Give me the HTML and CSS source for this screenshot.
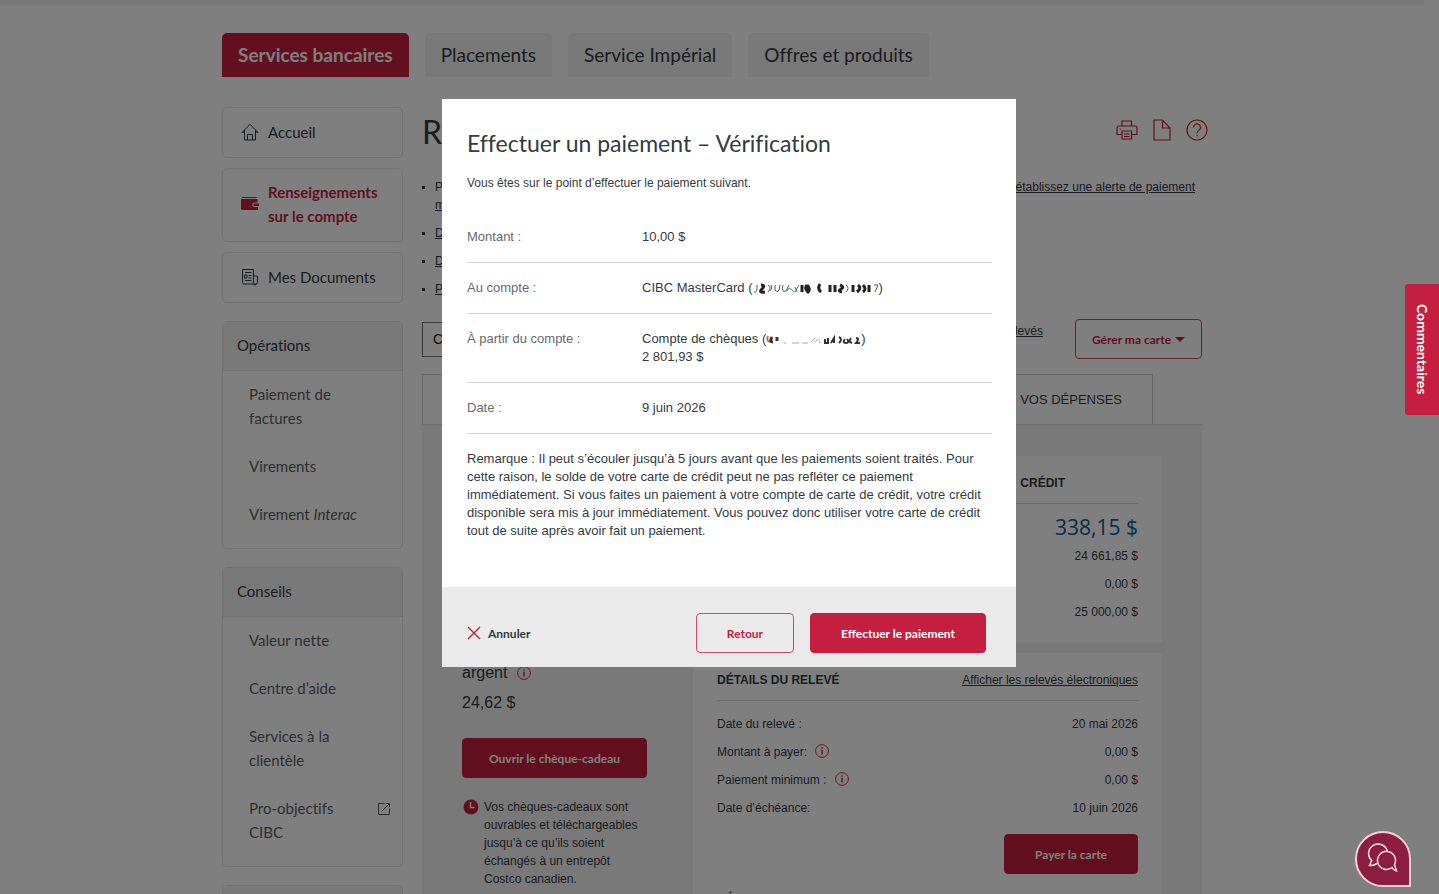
FILE: index.html
```html
<!DOCTYPE html>
<html lang="fr">
<head>
  <meta charset="UTF-8">
  <meta name="viewport" content="width=device-width, initial-scale=1.0">
  <title>Effectuer un paiement – Vérification</title>
  <link rel="stylesheet" href="styles.css">
</head>
<body>
  <svg class="defs" aria-hidden="true">
    <symbol id="info" viewBox="0 0 14 14">
      <circle cx="7" cy="7" r="6.4" fill="none" stroke="currentColor" stroke-width="0.9"/>
      <path d="M7 5.8v4.700M7 3.300v1.400" fill="none" stroke="currentColor" stroke-width="1.400"/>
    </symbol>
  </svg>

  <div class="page">
    <div class="topband"></div>
    <nav class="tabs">
      <a href="#" class="tab active">Services bancaires</a>
      <a href="#" class="tab">Placements</a>
      <a href="#" class="tab">Service Impérial</a>
      <a href="#" class="tab">Offres et produits</a>
    </nav>

    <div class="columns">
      <aside class="sidebar">
        <a href="#" class="side-link">
          <svg width="18" height="18" viewBox="0 0 18 18" fill="none" stroke="currentColor"><path d="M1 9.5 9 1.3l8 8.2M3.5 7.2V17h11V7.2M1 9.5l2.5-.8M17 9.5l-2.500-.8M6.500 17v-5.500h5V17"/></svg>
          <span>Accueil</span>
        </a>
        <a href="#" class="side-link current">
          <svg width="18" height="16" viewBox="0 0 18 16" fill="currentColor"><path d="M1.500 1h13.500a1 1 0 0 1 1 1H0.500a1 1 0 0 1 1-1zM0 3h16.500v3.500h-3a2 2 0 0 0 0 4.500h3.500v3H1.500A1.500 1.500 0 0 1 0 12.500zM13.500 7.500H18v2.500h-4.500a1.250 1.250 0 0 1 0-2.500z"/></svg>
          <span>Renseignements sur le compte</span>
        </a>
        <a href="#" class="side-link">
          <svg width="18" height="18" viewBox="0 0 18 18" fill="none" stroke="currentColor"><path d="M12.500 14.500v-13H1.500v13a1.500 1.500 0 0 0 1.500 1.500h12a1.500 1.500 0 0 0 1.500-1.500v-6.500h-4M12.500 14.500a1.500 1.500 0 0 0 3 1.500M4 4.500h6.500M7.500 7.500h3M7.500 10h3M4 12.500h6.500M3.500 7h2.500v3h-2.500z"/></svg>
          <span>Mes Documents</span>
        </a>

        <section class="side-group">
          <h2>Opérations</h2>
          <ul>
            <li><a href="#">Paiement de factures</a></li>
            <li><a href="#">Virements</a></li>
            <li><a href="#">Virement <em>Interac</em></a></li>
          </ul>
        </section>
        <section class="side-group">
          <h2>Conseils</h2>
          <ul>
            <li><a href="#">Valeur nette</a></li>
            <li><a href="#">Centre d’aide</a></li>
            <li><a href="#">Services à la clientèle</a></li>
            <li>
              <a href="#">Pro-objectifs CIBC</a>
              <svg class="external" width="14" height="14" viewBox="0 0 14 14" fill="none" stroke="currentColor"><path d="M7.500 1.500h-6v11h11v-6M4.500 9.500l8-8M9 1.500h3.500v3.500"/></svg>
            </li>
          </ul>
        </section>
        <section class="side-group"><h2></h2></section>
      </aside>

      <main class="main">
        <header class="title-row">
          <h1>R</h1>
          <div class="tools">
            <button type="button" aria-label="Imprimer"><svg width="22" height="20" viewBox="0 0 22 20" fill="none" stroke="currentColor" stroke-width="1.200"><path d="M6 6V1h9.500v5M6 14.500H1V8a2 2 0 0 1 2-2h16a2 2 0 0 1 2 2v6.500h-5.500M3.500 9h1.500M6 11h9.500v8H6zM8 14h5.500M8 16.500h5.500"/></svg></button>
            <button type="button" aria-label="Document"><svg width="18" height="22" viewBox="0 0 18 22" fill="none" stroke="currentColor" stroke-width="1.200"><path d="M1 1h8.500l7.500 8v12H1zM9.500 1v8H17"/></svg></button>
            <button type="button" aria-label="Aide"><svg width="22" height="22" viewBox="0 0 22 22" fill="none" stroke="currentColor" stroke-width="1.200"><circle cx="11" cy="11" r="10"/><path d="M7.500 8.500a3.500 3.500 0 1 1 5.500 2.800c-1.300 1-2 1.500-2 3M11 15.800v1.400"/></svg></button>
          </div>
        </header>

        <ul class="notices">
          <li>
            <div class="notice-line"><span>P</span><a href="#">établissez une alerte de paiement</a></div>
            <a href="#">m</a>
          </li>
          <li><a href="#">D</a></li>
          <li><a href="#">D</a></li>
          <li><a href="#">P</a></li>
        </ul>

        <div class="account-bar">
          <select aria-label="Compte"><option>C</option></select>
          <a href="#" class="statements">levés</a>
          <button type="button" class="btn outline">Gérer ma carte <span class="caret"></span></button>
        </div>

        <div class="account-tabs"><a href="#">VOS DÉPENSES</a></div>

        <div class="panel">
          <section class="rewards">
            <p class="big">argent <svg class="info"><use href="#info"/></svg></p>
            <p class="big">24,62 $</p>
            <button type="button" class="btn solid">Ouvrir le chèque-cadeau</button>
            <div class="expiry">
              <svg width="16" height="16" viewBox="0 0 16 16"><circle cx="8" cy="8" r="7.500" fill="#c41f3e"/><path d="M7.500 3v5.500h4" fill="none" stroke="#fff" stroke-width="1.400"/></svg>
              <p>Vos chèques-cadeaux sont ouvrables et téléchargeables jusqu’à ce qu’ils soient échangés à un entrepôt Costco canadien.</p>
            </div>
          </section>
          <div class="cards">
            <section class="card">
              <div class="card-head end"><h3>CRÉDIT</h3></div>
              <p class="available">338,15 $</p>
              <p class="amount">24 661,85 $</p>
              <p class="amount">0,00 $</p>
              <p class="amount">25 000,00 $</p>
            </section>
            <section class="card">
              <div class="card-head"><h3>DÉTAILS DU RELEVÉ</h3><a href="#">Afficher les relevés électroniques</a></div>
              <dl>
                <div><dt>Date du relevé :</dt><dd>20 mai 2026</dd></div>
                <div><dt>Montant à payer: <svg class="info"><use href="#info"/></svg></dt><dd>0,00 $</dd></div>
                <div><dt>Paiement minimum : <svg class="info"><use href="#info"/></svg></dt><dd>0,00 $</dd></div>
                <div><dt>Date d’échéance:</dt><dd>10 juin 2026</dd></div>
              </dl>
              <button type="button" class="btn solid pay">Payer la carte</button>
              <h3 class="next-head">DÉ</h3>
            </section>
          </div>
        </div>
      </main>
    </div>
  </div>

  <div class="overlay">
    <div class="overlay-inner">
      <div class="modal" role="dialog" aria-modal="true" aria-labelledby="modalTitle">
        <div class="modal-body">
          <h2 id="modalTitle">Effectuer un paiement – Vérification</h2>
          <p class="intro">Vous êtes sur le point d’effectuer le paiement suivant.</p>
          <dl class="details">
            <div><dt>Montant :</dt><dd>10,00 $</dd></div>
            <div>
              <dt>Au compte :</dt>
              <dd>CIBC MasterCard (<svg class="masked" width="126" height="12" viewBox="0 0 126 12" fill="none" stroke="#222"><path d="M1 10q3 1 3-4V3M15 3q4 2 0 7M17 9q3-3 1-6M22 3v5q4 5 5-5M30 3q-2 8 3 6l3-6M93 3q4 3 0 7M121 3h4l-3 7" stroke="#555"/><path d="M8 3q5 0 1 4t3 3M49 3v7M54 3q-3 3 1 7q3-3-1-7M67 2q-3 5 1 8M77 3v7M82 3v7M87 3q5 2 1 4t1 3M100 3v7M105 3q4 3-1 7M110 3q4 4 0 7M116 3v7" stroke-width="3"/><path d="M34 9q2-5 5-1t4 0l3-5M42 5l2 5" stroke="#467783"/></svg>)</dd>
            </div>
            <div>
              <dt>À partir du compte :</dt>
              <dd>Compte de chèques (<svg class="masked" width="95" height="12" viewBox="0 0 95 12" fill="none" stroke="#333"><path d="M2 3q-2 5 2 6" stroke="#b67942" stroke-width="2"/><path d="M6 4q-3 5 1 5M11 4v4" stroke-width="3"/><path d="M18 10h2M26 10h7M36 10h6M45 9l4-4M49 9q4-5 5 1" stroke="#aaa"/><path d="M59 6v4h3V5M65 10l3-5v5M73 4q4 2 0 6M79 6q-3 4 1 4t1-4M85 5q-3 4 1 5M90 5q4 0 0 5h4" stroke-width="2"/></svg>)<br>2 801,93 $</dd>
            </div>
            <div><dt>Date :</dt><dd>9 juin 2026</dd></div>
          </dl>
          <p class="remark">Remarque : Il peut s’écouler jusqu’à 5 jours avant que les paiements soient traités. Pour cette raison, le solde de votre carte de crédit peut ne pas refléter ce paiement immédiatement. Si vous faites un paiement à votre compte de carte de crédit, votre crédit disponible sera mis à jour immédiatement. Vous pouvez donc utiliser votre carte de crédit tout de suite après avoir fait un paiement.</p>
        </div>
        <div class="modal-footer">
          <button type="button" class="cancel">
            <svg width="14" height="14" viewBox="0 0 14 14" fill="none" stroke="#c41f3e" stroke-width="1.400"><path d="M1 1l12 12M13 1 1 13"/></svg>
            Annuler
          </button>
          <button type="button" class="btn outline back">Retour</button>
          <button type="button" class="btn solid">Effectuer le paiement</button>
        </div>
      </div>
    </div>
  </div>

  <button type="button" class="feedback">Commentaires</button>
  <button type="button" class="chat" aria-label="Clavardage">
    <svg width="32" height="32" viewBox="0 0 32 32" fill="none" stroke="#ffdce6" stroke-width="1.500"><path d="M10 20.500q-4 2.500-7.500 2l2.200-5A9.500 9.500 0 1 1 20.500 9"/><path d="M25 24.500a9 9 0 1 1 2.500-3l2 6.500q-3-.5-4.500-3.500z"/></svg>
  </button>
</body>
</html>
```

FILE: styles.css
```css
* {
  box-sizing: border-box;
}
body {
  margin: 0;
  background: #fff;
  color: #333b42;
  font-family: "Liberation Sans", Arial, sans-serif;
  font-size: 12px;
  line-height: 18px;
  font-variant-ligatures: none;
}
h1, h2, h3, p, ul, dl, dd {
  margin: 0;
  padding: 0;
}
a {
  color: inherit;
}
button {
  font-family: Lato, sans-serif;
  cursor: pointer;
}
.defs {
  position: absolute;
  width: 0;
  height: 0;
}
.page {
  height: 100vh;
  overflow: hidden;
  padding-right: 15px;
}
.topband {
  height: 6px;
  background: #f2f2f2;
}
.tabs, .columns, .overlay-inner {
  max-width: 980px;
  margin: 0 auto;
}
.tabs {
  display: flex;
  gap: 16px;
  padding-top: 27px;
}
.tab {
  height: 44px;
  padding: 0 16px;
  border-radius: 5px 5px 0 0;
  background: #f2f2f2;
  font-family: Lato, sans-serif;
  font-size: 19px;
  line-height: 44px;
  text-decoration: none;
}
.tab.active {
  background: #c41f3e;
  color: #fff;
  font-weight: bold;
}
.columns {
  display: flex;
  gap: 19px;
  padding-top: 30px;
}

/* left navigation */
.sidebar {
  flex: 0 0 181px;
  min-width: 0;
  display: flex;
  flex-direction: column;
  gap: 10px;
  font-family: Lato, sans-serif;
  font-size: 15px;
  line-height: 24px;
}
.side-link {
  display: flex;
  align-items: center;
  gap: 9px;
  padding: 11px 18px 13px;
  min-height: 51px;
  border: 1px solid #e4e4e4;
  border-radius: 5px;
  text-decoration: none;
}
.side-link svg {
  flex: none;
}
.side-link.current {
  color: #c41f3e;
  font-weight: bold;
}
.side-group {
  margin-top: 8px;
  border: 1px solid #e4e4e4;
  border-radius: 5px;
}
.side-group h2 {
  height: 49px;
  padding: 11px 14px;
  border-bottom: 1px solid #e4e4e4;
  background: #f2f2f2;
  font-size: 15px;
  font-weight: normal;
}
.side-group ul {
  padding-bottom: 9px;
  list-style: none;
}
.side-group li {
  display: flex;
  justify-content: space-between;
  padding: 11px 11px 13px 26px;
  color: #5a5f64;
}
.side-group a {
  max-width: 115px;
  text-decoration: none;
}
.external {
  flex: none;
  margin-top: 6px;
}

/* account page */
.main {
  flex: 1;
  min-width: 0;
}
.title-row {
  display: flex;
  justify-content: space-between;
}
h1 {
  font-family: Lato, sans-serif;
  font-size: 32px;
  font-weight: normal;
  line-height: 50px;
}
.tools {
  display: flex;
  align-items: center;
  gap: 15px;
  height: 45px;
  margin-right: -6px;
}
.tools button {
  display: flex;
  padding: 0;
  border: 0;
  background: none;
  color: #c41f3e;
}
.notices {
  display: flex;
  flex-direction: column;
  gap: 10px;
  margin-top: 21px;
  padding-left: 13px;
  list-style: square;
}
.notices li::marker {
  font-size: 10px;
}
.notice-line {
  display: flex;
  justify-content: space-between;
  margin-right: 7px;
}
.account-bar {
  display: flex;
  align-items: center;
  justify-content: space-between;
  margin-top: 21px;
}
.account-bar select {
  width: 260px;
  height: 35px;
  padding: 0 6px;
  border: 1px solid #777;
  background: #fff;
  color: #222;
  font: 14px "Liberation Sans", Arial, sans-serif;
}
.statements {
  margin-left: auto;
  margin-right: 32px;
  padding-bottom: 16px;
}
.btn {
  height: 40px;
  padding: 0 30px;
  border: 1px solid #c41f3e;
  border-radius: 4px;
  font-size: 12px;
  font-weight: bold;
  white-space: nowrap;
}
.btn.outline {
  padding: 0 16px;
  border-color: #cb4c65;
  background: none;
  color: #c41f3e;
}
.btn.solid {
  background: #c41f3e;
  color: #fff;
}
.caret {
  display: inline-block;
  margin: 0 0 2px 1px;
  border: 5px solid transparent;
  border-top-color: currentColor;
  border-bottom: 0;
}
.account-tabs {
  margin-top: 15px;
  margin-right: 49px;
  padding: 0 30px;
  border: 1px solid #ccc;
  border-bottom: 0;
  font-size: 13px;
  line-height: 49px;
  text-align: right;
}
.account-tabs a {
  text-decoration: none;
}
.panel {
  display: flex;
  border-top: 1px solid #ddd;
  background: #f2f2f2;
}
.rewards {
  flex: 0 0 271px;
  padding: 233px 46px 0 40px;
}
.big {
  font-size: 16px;
  line-height: 30px;
}
.info {
  width: 14px;
  height: 14px;
  margin-left: 5px;
  color: #c41f3e;
  vertical-align: -2px;
}
.rewards .btn {
  width: 100%;
  margin-top: 20px;
  padding: 0;
}
.expiry {
  display: flex;
  gap: 5px;
  margin-top: 20px;
  padding-left: 1px;
}
.expiry svg {
  flex: none;
  margin-top: 1px;
}
.cards {
  flex: 1;
  display: flex;
  flex-direction: column;
  gap: 11px;
  padding: 31px 40px 0 0;
}
.card {
  padding: 0 24px 16px;
  background: #fff;
}
.card-head {
  display: flex;
  align-items: center;
  justify-content: space-between;
  height: 48px;
  padding-top: 7px;
  border-bottom: 1px solid #d8d8d8;
}
.card-head.end {
  justify-content: flex-end;
  padding-right: 73px;
}
.card h3 {
  font-size: 12px;
}
.available {
  color: #0b5f9c;
  font-family: "Open Sans", sans-serif;
  font-size: 21px;
  line-height: 46px;
  height: 38px;
  text-align: right;
}
.amount {
  line-height: 28px;
  text-align: right;
}
.card dl {
  padding-top: 9px;
}
.card dl div {
  display: flex;
  justify-content: space-between;
  line-height: 28px;
}
.pay {
  display: block;
  margin: 12px 0 0 auto;
}
.card .next-head {
  margin-top: 16px;
}

/* payment dialog */
.overlay {
  position: fixed;
  inset: 0;
  padding-right: 15px;
  background: rgba(0, 0, 0, 0.5);
}
.overlay-inner {
  display: flow-root;
}
.modal {
  width: 574px;
  margin: 99px 0 0 220px;
  background: #fff;
}
.modal-body {
  padding: 29px 24px 47px 25px;
}
.modal h2 {
  font-family: Lato, sans-serif;
  font-size: 23px;
  font-weight: normal;
  line-height: 30px;
}
.intro {
  margin: 16px 0 20px;
}
.details, .remark {
  font-size: 13px;
}
.details div {
  display: flex;
  padding: 16px 0;
  border-bottom: 1px solid #d4d4d4;
}
.details dt {
  width: 175px;
  color: #656b70;
}
.masked {
  vertical-align: -2px;
}
.remark {
  margin-top: 16px;
}
.modal-footer {
  display: flex;
  align-items: center;
  gap: 16px;
  height: 80px;
  padding: 12px 30px 0 25px;
  background: #eaeaea;
}
.cancel {
  display: flex;
  align-items: center;
  gap: 7px;
  margin-right: auto;
  padding: 0;
  border: 0;
  background: none;
  color: #333b42;
  font-size: 12px;
  font-weight: bold;
}
.modal .btn.back {
  padding: 0 30px;
}

/* floating buttons */
.feedback {
  position: fixed;
  top: 284px;
  right: 0;
  width: 34px;
  height: 131px;
  padding: 0;
  border: 0;
  border-radius: 3px 0 0 3px;
  background: #c41f3e;
  color: #fff;
  font-size: 14px;
  font-weight: bold;
  writing-mode: vertical-rl;
}
.chat {
  position: fixed;
  right: 28px;
  bottom: 7px;
  display: flex;
  align-items: center;
  justify-content: center;
  width: 56px;
  height: 56px;
  padding: 0;
  border: 2px solid #f7cfdb;
  border-radius: 50% 50% 0 50%;
  background: #8b1d41;
}
```
